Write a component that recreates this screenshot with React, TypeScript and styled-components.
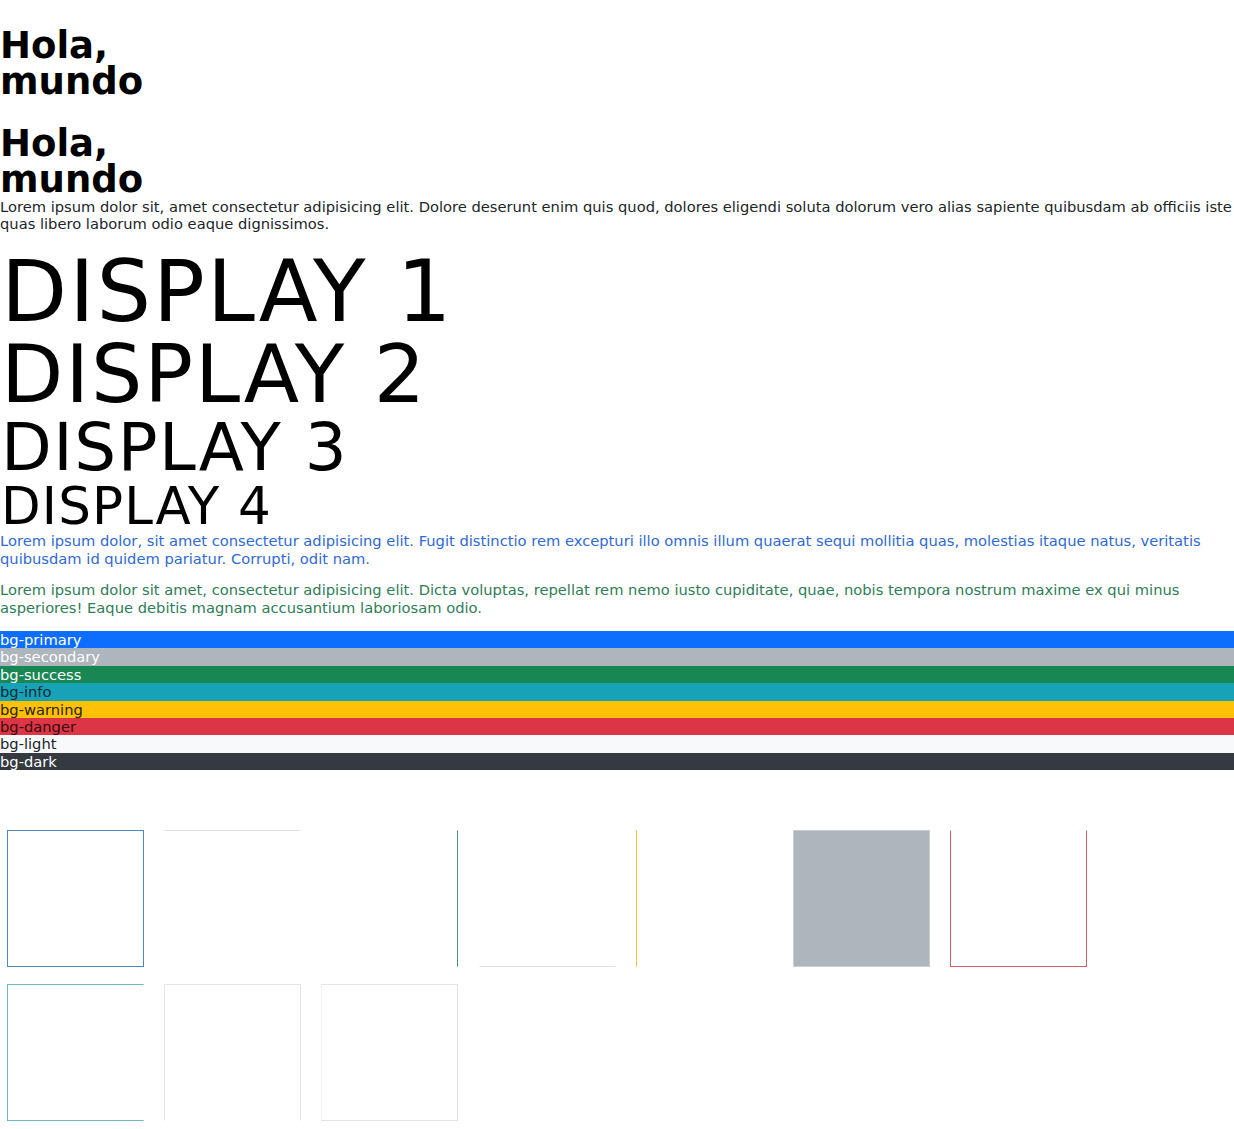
import React from "react";
import styled, { createGlobalStyle } from "styled-components";

const Global = createGlobalStyle`
  html, body {
    margin: 0;
    padding: 0;
    background: #ffffff;
  }
  body {
    font-family: "DejaVu Sans", Verdana, sans-serif;
    font-size: 14.7px;
    line-height: 17.4px;
    color: #212529;
  }
`;

const Page = styled.main`
  display: flex;
  flex-direction: column;
`;

const Heading = styled.h1<{ $first?: boolean }>`
  max-width: 160px;
  margin: ${(p) => (p.$first ? "28px 0 26px" : "0")};
  font-size: 37px;
  line-height: 36px;
  font-weight: 700;
  color: #000;
`;

const Text = styled.p<{ $tone?: string; $after: number }>`
  margin: 0 0 ${(p) => p.$after}px;
  color: ${(p) => p.$tone ?? "#212529"};
`;

const Display = styled.h2<{ $size: number }>`
  margin: 0;
  padding-left: 1px;
  font-size: ${(p) => p.$size}px;
  line-height: 1;
  font-weight: 400;
  letter-spacing: 0.023em;
  color: #000;
`;

const Bars = styled.div`
  display: flex;
  flex-direction: column;
`;

const Bar = styled.div<{ $bg: string; $fg: string }>`
  height: 17.4px;
  line-height: 17.4px;
  background: ${(p) => p.$bg};
  color: ${(p) => p.$fg};
`;

const Boxes = styled.div`
  display: flex;
  flex-wrap: wrap;
  column-gap: 20.2px;
  row-gap: 17px;
  padding: 60px 0 0 7px;
`;

type Sides = { t?: string; r?: string; b?: string; l?: string };

const Box = styled.div<{ $s: Sides; $fill?: string }>`
  box-sizing: border-box;
  width: 137px;
  height: 137px;
  background: ${(p) => p.$fill ?? "transparent"};
  border-top: 1px solid ${(p) => p.$s.t ?? "transparent"};
  border-right: 1px solid ${(p) => p.$s.r ?? "transparent"};
  border-bottom: 1px solid ${(p) => p.$s.b ?? "transparent"};
  border-left: 1px solid ${(p) => p.$s.l ?? "transparent"};
`;

const bars = [
  { name: "bg-primary", bg: "#0d6efd", fg: "#ffffff" },
  { name: "bg-secondary", bg: "#adb5bd", fg: "#ffffff" },
  { name: "bg-success", bg: "#198754", fg: "#ffffff" },
  { name: "bg-info", bg: "#17a2b8", fg: "#0b2a33" },
  { name: "bg-warning", bg: "#ffc107", fg: "#2a2100" },
  { name: "bg-danger", bg: "#dc3545", fg: "#3a0a10" },
  { name: "bg-light", bg: "#f8f9fa", fg: "#212529" },
  { name: "bg-dark", bg: "#343a40", fg: "#ffffff" },
];

const blue = "#4a89c0";
const soft = "#e3e3e3";
const teal = "#6ab7c3";

const boxes: { s: Sides; fill?: string }[] = [
  { s: { t: blue, r: blue, b: blue, l: blue } },
  { s: { t: soft } },
  { s: { r: "#3d9a7a" } },
  { s: { b: soft } },
  { s: { l: "#e0cb3a" } },
  { s: { t: "#c9ced3", r: "#c9ced3", b: "#c9ced3", l: "#c9ced3" }, fill: "#adb5bd" },
  { s: { r: "#c9606c", b: "#c9606c", l: "#c9606c" } },
  { s: { t: teal, b: teal, l: teal } },
  { s: { t: soft, r: soft, l: soft } },
  { s: { t: soft, r: soft, b: soft, l: "#f1f1f1" } },
];

export default function App() {
  return (
    <>
      <Global />
      <Page>
        <Heading $first>Hola, mundo</Heading>
        <Heading>Hola, mundo</Heading>
        <Text $after={15}>
          Lorem ipsum dolor sit, amet consectetur adipisicing elit. Dolore deserunt enim quis quod,
          dolores eligendi soluta dolorum vero alias sapiente quibusdam ab officiis iste quas libero
          laborum odio eaque dignissimos.
        </Text>
        <Display $size={86}>DISPLAY 1</Display>
        <Display $size={81}>DISPLAY 2</Display>
        <Display $size={66}>DISPLAY 3</Display>
        <Display $size={51.5}>DISPLAY 4</Display>
        <Text $tone="#2f6ad4" $after={14}>
          Lorem ipsum dolor, sit amet consectetur adipisicing elit. Fugit distinctio rem excepturi
          illo omnis illum quaerat sequi mollitia quas, molestias itaque natus, veritatis quibusdam
          id quidem pariatur. Corrupti, odit nam.
        </Text>
        <Text $tone="#2f7d57" $after={15}>
          Lorem ipsum dolor sit amet, consectetur adipisicing elit. Dicta voluptas, repellat rem nemo
          iusto cupiditate, quae, nobis tempora nostrum maxime ex qui minus asperiores! Eaque debitis
          magnam accusantium laboriosam odio.
        </Text>
        <Bars>
          {bars.map((b) => (
            <Bar key={b.name} $bg={b.bg} $fg={b.fg}>
              {b.name}
            </Bar>
          ))}
        </Bars>
        <Boxes>
          {boxes.map((b, i) => (
            <Box key={i} $s={b.s} $fill={b.fill} />
          ))}
        </Boxes>
      </Page>
    </>
  );
}
